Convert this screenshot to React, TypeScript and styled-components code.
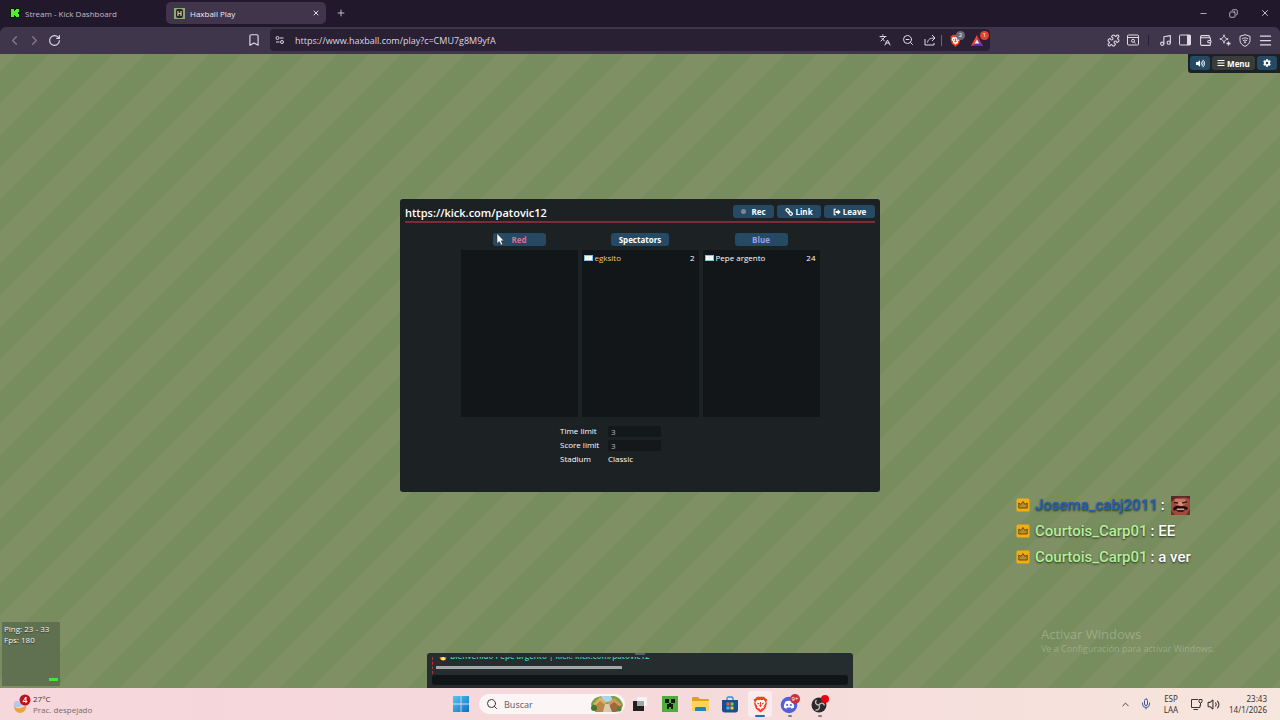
import React from "react";
import styled, { createGlobalStyle } from "styled-components";
import {
  Bookmark,
  ChevronLeft,
  ChevronRight,
  ChevronUp,
  Copy,
  Languages,
  Menu,
  Mic,
  Minus,
  Music,
  PanelRight,
  Plus,
  Puzzle,
  RotateCw,
  Search,
  Volume2,
  Wallet,
  X,
  ZoomOut,
} from "lucide-react";
import { FaBars, FaCog, FaVolumeUp } from "react-icons/fa";

const ui = `"Open Sans", "Noto Sans", sans-serif`;
const system = `"Noto Sans", "Open Sans", sans-serif`;

const Global = createGlobalStyle`
  * { box-sizing: border-box; }
  body { margin: 0; font-family: ${ui}; font-size: 8px; }
  button, input, select { font: inherit; color: inherit; border: 0; padding: 0; margin: 0; background: none; }
  svg { display: block; flex: none; }
`;

const Page = styled.div`
  display: flex;
  flex-direction: column;
  min-height: 100vh;
`;

/* ---------- browser ---------- */

const Browser = styled.header`
  background: #22182c;
  color: #e0dae5;
  font-family: ${ui};
`;

const TabStrip = styled.div`
  display: flex;
  align-items: center;
  height: 27px;
  padding: 0 0 1px 6px;
`;

const Tab = styled.div<{ $active?: boolean }>`
  display: flex;
  align-items: center;
  gap: 5px;
  width: 160px;
  height: 22px;
  padding: 0 4px;
  padding-left: ${(p) => (p.$active ? 8 : 4)}px;
  border-radius: 5px;
  font-size: 8px;
  color: ${(p) => (p.$active ? "#f0edf3" : "#c3bac9")};
  background: ${(p) => (p.$active ? "#40354a" : "transparent")};
`;

const TabTitle = styled.span`
  flex: 1;
  white-space: nowrap;
`;

const IconButton = styled.button<{ $w?: number; $dim?: boolean }>`
  display: flex;
  align-items: center;
  justify-content: center;
  position: relative;
  flex: none;
  width: ${(p) => p.$w ?? 20}px;
  height: 20px;
  color: ${(p) => (p.$dim ? "#857a90" : "#e0dae5")};
`;

const WindowButtons = styled.div`
  display: flex;
  margin-left: auto;
`;

const RestoreIcon = styled(Copy)`
  transform: scaleX(-1);
`;

const Toolbar = styled.div`
  display: flex;
  align-items: center;
  height: 27px;
  padding-bottom: 1px;
  border-radius: 6px 6px 0 0;
  background: #40364b;
`;

const ToolbarLead = styled.div`
  display: flex;
  justify-content: space-between;
  flex: 0 0 270px;
  padding: 0 6px 0 4px;
`;

const ToolbarTail = styled.div`
  display: flex;
  align-items: center;
  justify-content: flex-end;
  flex: 0 0 290px;
  padding-right: 5px;
`;

const Group = styled.div`
  display: flex;
  align-items: center;
`;

const AddressBar = styled.div`
  display: flex;
  align-items: center;
  flex: 1;
  height: 22px;
  padding-right: 1px;
  border-radius: 4px;
  background: #2a2034;
`;

const Address = styled.input`
  flex: 1;
  min-width: 0;
  margin-left: 5px;
  font-size: 9px;
  color: #ddd6e2;
`;

const Divider = styled.span<{ $tight?: boolean }>`
  width: 1px;
  height: 11px;
  margin: ${(p) => (p.$tight ? "0 3px 0 0" : "0 6px 0 5px")};
  background: ${(p) => (p.$tight ? "#6d6278" : "#2a2034")};
`;

const Count = styled.span<{ $bg: string }>`
  position: absolute;
  top: 1px;
  right: 0;
  width: 9px;
  height: 9px;
  border-radius: 5px;
  background: ${(p) => p.$bg};
  color: #fff;
  font-size: 6px;
  line-height: 9px;
  text-align: center;
`;

/* ---------- game ---------- */

const Field = styled.main`
  position: relative;
  display: flex;
  flex: 1;
  flex-direction: column;
  align-items: center;
  background-color: #7f9064;
  background-image: linear-gradient(135deg, #788d5e 25%, #7f9064 25%, #7f9064 50%, #788d5e 50%, #788d5e 75%, #7f9064 75%);
  background-size: 64px 64px;
  background-position: 17px 0;
  color: #fff;
`;

const Stage = styled.div`
  display: flex;
  flex: 1;
  align-items: center;
  justify-content: center;
  width: 100%;
  padding-bottom: 16px;
`;

const Room = styled.section`
  display: flex;
  flex-direction: column;
  width: 480px;
  max-width: 100%;
  min-height: 293px;
  padding: 5px 5px 24px;
  border-radius: 3px;
  background: #1c2124;
`;

const RoomHeader = styled.div`
  display: flex;
  align-items: center;
  justify-content: space-between;
  height: 19px;
  padding-bottom: 2px;
  border-bottom: 2px solid #7c2c36;
`;

const RoomTitle = styled.h1`
  margin: 0;
  padding-top: 2px;
  font-size: 11px;
  font-weight: 600;
  line-height: 16px;
`;

const Actions = styled.div`
  display: flex;
  gap: 3px;
`;

const GameButton = styled.button<{ $w?: number; $color?: string; $bg?: string }>`
  display: flex;
  align-items: center;
  justify-content: center;
  gap: 2px;
  width: ${(p) => p.$w ?? 54}px;
  height: 13px;
  border-radius: 3px;
  background: ${(p) => p.$bg ?? "#264a64"};
  color: ${(p) => p.$color ?? "#fff"};
  font-size: 8px;
  font-weight: 700;
  line-height: 13px;
`;

const RecDot = styled.span`
  width: 5px;
  height: 5px;
  margin-right: 3px;
  border-radius: 3px;
  background: #7b8790;
`;

const Teams = styled.div`
  display: flex;
  justify-content: center;
  gap: 4px;
  margin-top: 10px;
`;

const Team = styled.div`
  display: flex;
  flex-direction: column;
  align-items: center;
  gap: 4px;
  width: 117px;
`;

const PlayerList = styled.ul`
  width: 100%;
  height: 167px;
  margin: 0;
  padding: 1px 4px 2px 2px;
  background: #121619;
  list-style: none;
`;

const Player = styled.li<{ $admin?: boolean }>`
  display: flex;
  align-items: center;
  gap: 2px;
  height: 13px;
  color: #fff;
  font-size: 8px;
  line-height: 13px;

  span:first-of-type {
    flex: 1;
    color: ${(p) => (p.$admin ? "#e8cf6e" : "#fff")};
  }
`;

const Settings = styled.div`
  display: grid;
  grid-template-columns: 44px 53px;
  column-gap: 4px;
  width: 160px;
  margin: 7px auto 0;
  font-size: 8px;
  line-height: 14px;
  align-items: center;
`;

const Limit = styled.select`
  appearance: none;
  height: 11px;
  padding-left: 3px;
  border-radius: 2px;
  background: #14181b;
  color: #b9bdc0;
  opacity: 1;
  line-height: 11px;
`;

const TopMenu = styled.nav`
  position: absolute;
  top: 0;
  right: 0;
  display: flex;
  gap: 2px;
  padding: 2px 3px 3px 2px;
  border-radius: 0 0 0 3px;
  background: #1c2124;

  button { height: 14px; }
`;

const Stats = styled.div`
  position: absolute;
  left: 2px;
  bottom: 2px;
  width: 58px;
  height: 64px;
  padding: 1px 2px;
  background: #5f7150;
  color: #f3f5f0;
  font-size: 8px;
  line-height: 11px;
  text-shadow: 0 1px 1px #333;
`;

const PingBar = styled.span`
  position: absolute;
  right: 2px;
  bottom: 5px;
  width: 9px;
  height: 3px;
  background: #3dea2e;
`;

const Chat = styled.section`
  position: relative;
  width: 426px;
  max-width: 100%;
  height: 35px;
  padding: 4px 5px 0;
  border-radius: 3px 3px 0 0;
  background: #262d2f;
`;

const Grip = styled.span`
  position: absolute;
  top: 0;
  left: 50%;
  width: 10px;
  height: 2px;
  margin-left: -5px;
  background: #596063;
`;

const Log = styled.div`
  display: flex;
  flex-direction: column;
  justify-content: flex-end;
  height: 17px;
  overflow: hidden;
  border-left: 1px dashed #b0323c;
`;

const Welcome = styled.p`
  flex: none;
  margin: 0;
  padding-left: 5px;
  color: #3fd0bd;
  font-size: 8px;
  font-weight: 600;
  line-height: 12px;
  white-space: nowrap;
`;

const Rule = styled.hr`
  flex: none;
  width: 186px;
  height: 3px;
  margin: 4px 0 5px 3px;
  border: 0;
  background: #a3a7a7;
`;

const ChatInput = styled.input`
  display: block;
  width: 100%;
  height: 10px;
  margin-top: 1px;
  border-radius: 3px;
  background: #101517;
`;

const StreamChat = styled.div`
  position: absolute;
  right: 0;
  bottom: 118px;
  width: 264px;
  font-family: Roboto, sans-serif;
  font-size: 15px;
  font-weight: 500;
  text-shadow: 0 1px 2px rgba(0, 0, 0, 0.7);
`;

const StreamLine = styled.p<{ $color: string }>`
  display: flex;
  align-items: center;
  gap: 3px;
  height: 26px;
  margin: 0;
  white-space: nowrap;

  b { margin-left: 2px; font-weight: 500; color: ${(p) => p.$color}; }
`;

const Emote = styled.span`
  margin-left: 3px;
`;

const Watermark = styled.div`
  position: absolute;
  right: 0;
  bottom: 32px;
  width: 239px;
  color: rgba(226, 232, 214, 0.32);
  font-family: ${ui};
  font-size: 9px;
  line-height: 14px;

  strong { display: block; font-size: 13px; font-weight: 400; line-height: 16px; }
`;

const Pointer = styled.svg`
  position: absolute;
  top: 179px;
  left: calc(50% - 144px);
`;

/* ---------- taskbar ---------- */

const Taskbar = styled.footer`
  display: flex;
  align-items: center;
  height: 32px;
  background: linear-gradient(90deg, #f6d7dc, #f5d9db 50%, #f7e6dd);
  color: #3a3437;
  font-family: ${system};
  font-size: 8px;
`;

const Weather = styled.div`
  display: flex;
  flex: 1;
  align-items: center;
  gap: 2px;
  padding-left: 12px;
  font-family: ${ui};
  line-height: 11px;

  small { display: block; color: #75686c; font-size: 8px; }
`;

const Apps = styled.div`
  display: flex;
  align-items: center;
  gap: 6px;
  padding-left: 2px;
`;

const App24 = styled.button<{ $active?: boolean; $running?: boolean }>`
  position: relative;
  display: flex;
  align-items: center;
  justify-content: center;
  width: 24px;
  height: 26px;
  border-radius: 3px;
  background: ${(p) => (p.$active ? "#faecee" : "transparent")};

  &::after {
    content: "";
    position: absolute;
    bottom: 0;
    left: 50%;
    width: ${(p) => (p.$active ? 10 : p.$running ? 4 : 0)}px;
    height: 2px;
    border-radius: 1px;
    background: ${(p) => (p.$active ? "#1f6fb8" : "#857b7f")};
    transform: translateX(-50%);
  }
`;

const SearchBox = styled.label`
  display: flex;
  align-items: center;
  gap: 6px;
  width: 146px;
  height: 20px;
  margin-right: -3px;
  padding: 0 2px 0 7px;
  border-radius: 10px;
  background: #fcf5f5;

  input { flex: 1; min-width: 0; font-size: 9px; }
  input::placeholder { color: #6b6265; opacity: 1; }
`;

const Tray = styled.div`
  display: flex;
  flex: 1;
  align-items: center;
  justify-content: flex-end;
  padding-right: 13px;
  line-height: 11px;
`;

const TrayText = styled.div<{ $w: number; $right?: boolean }>`
  width: ${(p) => p.$w}px;
  text-align: ${(p) => (p.$right ? "right" : "center")};
`;

/* ---------- drawings ---------- */

const KickLogo = () => (
  <svg width="10" height="10" viewBox="0 0 10 10">
    <rect width="10" height="10" rx="1" fill="#0b1a0a" />
    <path d="M1 1h3v2h1V2h1V1h3v3H8v2h1v3H6V8H5V7H4v2H1z" fill="#4bf522" />
  </svg>
);

const HaxballLogo = () => (
  <svg width="11" height="11" viewBox="0 0 11 11">
    <rect width="11" height="11" fill="#8fa877" />
    <rect x="2" y="1" width="7" height="9" rx="2" fill="#27251f" />
    <path d="M4 3v5M7 3v5M4 5.500h3" stroke="#e2c7a4" strokeWidth="1.200" />
  </svg>
);

const TuneIcon = () => (
  <svg width="10" height="10" viewBox="0 0 10 10" fill="none" stroke="currentColor" strokeWidth="1">
    <circle cx="2.500" cy="3" r="1.500" />
    <path d="M5 3h3.500M1 7h3.500" />
    <circle cx="7" cy="7" r="1.500" />
  </svg>
);

const ShareIcon = () => (
  <svg width="12" height="12" viewBox="0 0 12 12" fill="none" stroke="currentColor">
    <path d="M1 5v6h9V9M3.500 8.500C4 5.500 6 4 10.500 4M8 1l3 3-3 3" />
  </svg>
);

const BraveLion = ({ size }: { size: number }) => (
  <svg width={size} height={size} viewBox="0 0 20 20">
    <path d="M6 1h8l2 2 2 1-1 3 .5 2-2 6L10 19.500 4.500 15l-2-6L3 7 2 4l2-1z" fill="#f1451d" />
    <path d="M6 4.500l2.500.5L10 4.500l1.500.5 2.500-.5L16 8l-1 2-1.500 2 .5 2-2.500.500L10 16.500 8.500 14.500 6 14l.5-2L5 10 4 8z" fill="#fff" />
    <path d="M6 7.500l2.500 1-.5 1.500-1.500-.5zM14 7.500l-2.500 1 .5 1.500 1.500-.5zM9.300 7h1.400v3.500l1.300 1-2 1.500-2-1.500 1.300-1z" fill="#f1451d" />
  </svg>
);

const BatLogo = () => (
  <svg width="12" height="11" viewBox="0 0 12 11">
    <path d="M6 0L0 11h6V7z" fill="#ff4b2b" />
    <path d="M6 0l6 11H6V7z" fill="#9b2f94" />
    <path d="M0 11h12L6 8z" fill="#4f2db5" />
    <path d="M6 4.500L3.800 8.500h4.400z" fill="#fff" />
  </svg>
);

const TabSearchIcon = () => (
  <svg width="12" height="12" viewBox="0 0 12 12" fill="none" stroke="currentColor" strokeWidth="1">
    <rect x="0.500" y="1" width="11" height="10" rx="1" />
    <path d="M.5 3.500h11" />
    <circle cx="6" cy="6.800" r="1.500" />
    <path d="M7.200 8l1.300 1.300" />
  </svg>
);

const SidebarIcon = () => (
  <svg width="12" height="12" viewBox="0 0 12 12">
    <rect x="0.500" y="1" width="11" height="10" rx="1" fill="none" stroke="currentColor" />
    <path d="M8 1h3.500v10H8z" fill="currentColor" />
  </svg>
);

const SparkleIcon = () => (
  <svg width="12" height="12" viewBox="0 0 12 12" fill="none" stroke="currentColor" strokeWidth="1" strokeLinejoin="round">
    <path d="M5 .8c.5 2.700 1.500 3.700 4.200 4.200C6.500 5.500 5.500 6.500 5 9.200 4.500 6.500 3.500 5.500.8 5 3.500 4.500 4.500 3.500 5 .8z" />
    <path d="M9.500 7.500v4M7.500 9.500h4" strokeWidth="1.300" />
  </svg>
);

const ShieldVpn = () => (
  <svg width="12" height="13" viewBox="0 0 12 13" fill="none" stroke="currentColor" strokeWidth="1">
    <path d="M6 .7l5 1.600v4.200c0 2.700-2.300 4.700-5 5.900C3.300 11.200 1 9.200 1 6.500V2.300z" />
    <path d="M3 5c1.800-1.500 4.200-1.500 6 0M4 6.800c1.200-1 2.800-1 4 0" />
    <circle cx="6" cy="8.300" r=".6" fill="currentColor" />
  </svg>
);

const LinkIcon = () => (
  <svg width="8" height="8" viewBox="0 0 8 8" fill="none" stroke="currentColor" strokeWidth="1.200">
    <rect x="0.800" y="1.100" width="4" height="2.600" rx="1.300" transform="rotate(45 2.800 2.400)" />
    <rect x="3.500" y="4.100" width="4" height="2.600" rx="1.300" transform="rotate(45 5.500 5.400)" />
  </svg>
);

const LeaveIcon = () => (
  <svg width="8" height="8" viewBox="0 0 8 8">
    <path d="M3 1.200H1.200v5.600H3" fill="none" stroke="currentColor" strokeWidth="1.100" />
    <path d="M2.500 3h2.200V1.200L7.700 4l-3 2.800V5H2.500z" fill="currentColor" />
  </svg>
);

const Flag = () => (
  <svg width="9" height="6" viewBox="0 0 9 6">
    <rect width="9" height="6" fill="#7cc4ea" />
    <rect x="1" y="1" width="7" height="4" fill="#f4fafc" />
    <circle cx="4.500" cy="3" r="0.800" fill="#f4e0a8" />
  </svg>
);

const CrownBadge = () => (
  <svg width="14" height="14" viewBox="0 0 14 14">
    <rect x="0.500" y="0.500" width="13" height="13" rx="1.500" fill="#f5ac0c" />
    <path d="M2.800 5l2.200 1.500L7 3.500l2 3L11.200 5v5H2.800z" fill="#b98b2a" stroke="#5a4310" strokeWidth="0.900" />
  </svg>
);

const LaughEmote = () => (
  <svg width="19" height="19" viewBox="0 0 19 19">
    <rect width="19" height="19" fill="#9c4a3d" />
    <path d="M0 0h19v3L14 1.500 5 2 0 6z" fill="#5b2a25" />
    <path d="M4 3h10l2 4-3 2H6L3 7z" fill="#c47764" />
    <path d="M3 6.500l4 .5M11 7l5-1" stroke="#35120f" strokeWidth="1.300" />
    <path d="M8 6h3l1 4H7z" fill="#d98c78" />
    <path d="M2 13c1-3 4-3.500 7-3s6-.5 8 2l-1 2-3-1H6l-3 2z" fill="#1e0c0b" />
    <path d="M6 12.500h7V14H6z" fill="#c9a898" />
    <path d="M5 14h9l-2 2H7z" fill="#4a1715" />
    <path d="M0 14l4 5H0zM19 13l-4 6h4z" fill="#6e2e28" />
  </svg>
);

const WeatherIcon = () => (
  <svg width="19" height="20" viewBox="0 0 19 20">
    <path d="M2 10c0-3 3-4 5-2 3 0 4 4 1 5H4c-2 0-3-1-2-3z" fill="#a9cdf0" />
    <path d="M2 12c2 3 8 3 12-1 1 4-2 8-6 8-3 0-6-3-6-7z" fill="#efa13a" />
    <circle cx="13" cy="6" r="5.500" fill="#b5161f" />
    <text x="13" y="9" textAnchor="middle" fontSize="8" fontWeight="600" fill="#fff">4</text>
  </svg>
);

const WindowsLogo = () => (
  <svg width="16" height="16" viewBox="0 0 16 16">
    <linearGradient id="win" x1="0" y1="0" x2="1" y2="1">
      <stop offset="0" stopColor="#55c8f2" />
      <stop offset="1" stopColor="#0a6fc9" />
    </linearGradient>
    <path d="M0 0h7.600v7.600H0zM8.400 0H16v7.600H8.400zM0 8.400h7.600V16H0zM8.400 8.400H16V16H8.400z" fill="url(#win)" />
  </svg>
);

const VillagePicture = () => (
  <svg width="32" height="18" viewBox="0 0 32 18">
    <path d="M0 9C2 3 7 1 13 1h10c5 1 8 5 9 9-1 4-4 7-8 7H7C3 16 1 13 0 9z" fill="#7aa043" />
    <path d="M10 1h10l2 5-10 2z" fill="#a9d6e8" />
    <path d="M3 9l6-6 6 6v8H4z" fill="#b98747" />
    <path d="M2 9l7-7 7 6-3 1-4-3-4 4z" fill="#dcae68" />
    <path d="M17 10l6-6 7 6v5l-6 2h-6z" fill="#a3683a" />
    <path d="M16 9l7-6 8 7-3 1-5-4-5 4z" fill="#d19a59" />
    <path d="M14 9h4l3 8h-9z" fill="#d8cbb0" />
    <circle cx="3" cy="13" r="3" fill="#3f7a33" />
    <circle cx="28" cy="14" r="2.500" fill="#4d8638" />
  </svg>
);

const TaskViewIcon = () => (
  <svg width="14" height="14" viewBox="0 0 14 14">
    <rect x="4" y="0" width="10" height="9" fill="#f5f3f3" />
    <rect x="0" y="4" width="11" height="10" fill="#1f1f20" />
    <rect x="4" y="4" width="7" height="5" fill="#a6a5a5" />
  </svg>
);

const CreeperIcon = () => (
  <svg width="16" height="16" viewBox="0 0 16 16">
    <rect width="16" height="16" fill="#4fae3b" />
    <path d="M3 3h4v4H3zM9 3h4v4H9zM7 7h2v1h2v5H9v-2H7v2H5V8h2z" fill="#0d190b" />
  </svg>
);

const FolderIcon = () => (
  <svg width="17" height="15" viewBox="0 0 17 15">
    <path d="M0 1.500C0 .5.500 0 1.500 0H6l2 2h7.500c1 0 1.500.5 1.500 1.500V7H0z" fill="#dfa021" />
    <path d="M0 4h17v8.500c0 1-.5 1.500-1.500 1.500h-14C.5 14 0 13.500 0 12.500z" fill="#fbd25b" />
    <path d="M3 11.500c0-1 .5-1.500 1.500-1.500h8c1 0 1.500.5 1.500 1.500V14H3z" fill="#2a7fc6" />
  </svg>
);

const StoreIcon = () => (
  <svg width="16" height="17" viewBox="0 0 16 17">
    <path d="M5 5V2.500C5 1.500 5.500 1 6.500 1h3c1 0 1.500.5 1.500 1.500V5" fill="none" stroke="#2c8ed8" strokeWidth="1.300" />
    <path d="M0 4h16v10c0 1.500-1 2.500-2.500 2.500h-11C1 16.500 0 15.500 0 14z" fill="#17508f" />
    <path d="M4.500 6.500h3v3h-3z" fill="#ef5a3c" />
    <path d="M8.500 6.500h3v3h-3z" fill="#8cc63f" />
    <path d="M4.500 10.500h3v3h-3z" fill="#3cb4ee" />
    <path d="M8.500 10.500h3v3h-3z" fill="#fbc230" />
  </svg>
);

const DiscordIcon = () => (
  <svg width="20" height="20" viewBox="0 0 20 20">
    <circle cx="9" cy="11" r="8.300" fill="#5360de" />
    <path d="M5.500 7.500c2-1 5-1 7 0 1 1.800 1.700 3.800 1.600 6-.8.700-1.700 1-2.500 1.200l-.7-1.100H7.100l-.7 1.100c-.8-.2-1.700-.5-2.500-1.200-.1-2.200.6-4.200 1.600-6z" fill="#fff" />
    <circle cx="7.200" cy="11" r="1.100" fill="#5360de" />
    <circle cx="10.800" cy="11" r="1.100" fill="#5360de" />
    <circle cx="15" cy="5" r="5" fill="#c83040" />
    <text x="15" y="7" textAnchor="middle" fontSize="6" fill="#fff">9+</text>
  </svg>
);

const ObsIcon = () => (
  <svg width="18" height="18" viewBox="0 0 18 18">
    <circle cx="8" cy="10" r="7.500" fill="#2a292b" />
    <path d="M8 10C4.500 10 3.500 7 5.500 5M8 10c2-3 5-2 5.500.5M8 10c1.500 3-.5 5.500-3.500 5" fill="none" stroke="#bdbcbd" strokeWidth="1.400" />
    <circle cx="14" cy="4" r="4" fill="#e8000f" />
  </svg>
);

const NetworkIcon = () => (
  <svg width="13" height="13" viewBox="0 0 13 13" fill="none" stroke="currentColor" strokeWidth="1">
    <path d="M8 1.500H1.500v8h8.500V7M3.500 11.500h4.500" />
    <path d="M9 1.500h3v2.500l-1 1h-1l-1-1zM10.500 5v3" />
  </svg>
);

/* ---------- data ---------- */

const teams = [
  { name: "Red", color: "#d9708a", width: 53, players: [] },
  { name: "Spectators", color: "#fff", width: 58, players: [{ name: "egksito", ping: 2, admin: true }] },
  { name: "Blue", color: "#9aa0e6", width: 53, players: [{ name: "Pepe argento", ping: 24, admin: false }] },
];

export default function App() {
  return (
    <Page>
      <Global />
      <Browser>
        <TabStrip>
          <Tab>
            <KickLogo />
            <TabTitle>Stream - Kick Dashboard</TabTitle>
          </Tab>
          <Tab $active>
            <HaxballLogo />
            <TabTitle>Haxball Play</TabTitle>
            <IconButton $w={12} aria-label="Close tab"><X size={8} strokeWidth={3} /></IconButton>
          </Tab>
          <IconButton $w={30} aria-label="New tab"><Plus size={10} /></IconButton>
          <WindowButtons>
            <IconButton $w={30} aria-label="Minimize"><Minus size={9} /></IconButton>
            <IconButton $w={31} aria-label="Restore"><RestoreIcon size={9} /></IconButton>
            <IconButton $w={31} aria-label="Close"><X size={10} /></IconButton>
          </WindowButtons>
        </TabStrip>
        <Toolbar>
          <ToolbarLead>
            <Group>
              <IconButton $dim aria-label="Back"><ChevronLeft size={15} strokeWidth={2} /></IconButton>
              <IconButton $dim aria-label="Forward"><ChevronRight size={15} strokeWidth={2} /></IconButton>
              <IconButton aria-label="Reload"><RotateCw size={13} strokeWidth={2} /></IconButton>
            </Group>
            <IconButton aria-label="Bookmark"><Bookmark size={14} /></IconButton>
          </ToolbarLead>
          <AddressBar>
            <IconButton aria-label="Site information"><TuneIcon /></IconButton>
            <Address aria-label="Address" defaultValue="https://www.haxball.com/play?c=CMU7g8M9yfA" />
            <IconButton $w={23} aria-label="Translate"><Languages size={12} /></IconButton>
            <IconButton $w={23} aria-label="Zoom"><ZoomOut size={12} /></IconButton>
            <IconButton $w={22} aria-label="Share"><ShareIcon /></IconButton>
            <Divider $tight />
            <IconButton aria-label="Brave shields">
              <BraveLion size={13} />
              <Count $bg="#6b6676">2</Count>
            </IconButton>
            <IconButton $w={24} aria-label="Brave rewards">
              <BatLogo />
              <Count $bg="#e2432c">1</Count>
            </IconButton>
          </AddressBar>
          <ToolbarTail>
            <IconButton aria-label="Extensions"><Puzzle size={13} /></IconButton>
            <IconButton aria-label="Search tabs"><TabSearchIcon /></IconButton>
            <Divider />
            <IconButton aria-label="Playlist"><Music size={13} /></IconButton>
            <IconButton aria-label="Sidebar"><SidebarIcon /></IconButton>
            <IconButton aria-label="Wallet"><Wallet size={13} /></IconButton>
            <IconButton aria-label="Assistant"><SparkleIcon /></IconButton>
            <IconButton aria-label="VPN"><ShieldVpn /></IconButton>
            <IconButton aria-label="Browser menu"><Menu size={15} /></IconButton>
          </ToolbarTail>
        </Toolbar>
      </Browser>

      <Field>
        <Stage>
          <Room>
            <RoomHeader>
              <RoomTitle>https://kick.com/patovic12</RoomTitle>
              <Actions>
                <GameButton $w={41}><RecDot />Rec</GameButton>
                <GameButton $w={44}><LinkIcon />Link</GameButton>
                <GameButton $w={51}><LeaveIcon />Leave</GameButton>
              </Actions>
            </RoomHeader>
            <Teams>
              {teams.map((team) => (
                <Team key={team.name}>
                  <GameButton $w={team.width} $color={team.color}>{team.name}</GameButton>
                  <PlayerList>
                    {team.players.map((p) => (
                      <Player key={p.name} $admin={p.admin}>
                        <Flag />
                        <span>{p.name}</span>
                        <span>{p.ping}</span>
                      </Player>
                    ))}
                  </PlayerList>
                </Team>
              ))}
            </Teams>
            <Settings>
              <label htmlFor="time">Time limit</label>
              <Limit id="time" disabled><option>3</option></Limit>
              <label htmlFor="score">Score limit</label>
              <Limit id="score" disabled><option>3</option></Limit>
              <span>Stadium</span>
              <span>Classic</span>
            </Settings>
          </Room>
        </Stage>

        <Chat>
          <Grip />
          <Log>
            <Welcome>🔥 Bienvenido Pepe argento | kick: kick.com/patovic12</Welcome>
            <Rule />
          </Log>
          <ChatInput aria-label="Chat message" />
        </Chat>

        <TopMenu>
          <GameButton $w={20} aria-label="Sound"><FaVolumeUp size={9} /></GameButton>
          <GameButton $w={43} $bg="#3a3c3c"><FaBars size={8} />Menu</GameButton>
          <GameButton $w={20} aria-label="Settings"><FaCog size={8} /></GameButton>
        </TopMenu>

        <Stats>
          Ping: 23 - 33<br />Fps: 180
          <PingBar />
        </Stats>

        <StreamChat>
          <StreamLine $color="#1d5fb4"><CrownBadge /><b>Josema_cabj2011</b><span>:</span><Emote><LaughEmote /></Emote></StreamLine>
          <StreamLine $color="#b5f09a"><CrownBadge /><b>Courtois_Carp01</b><span>: EE</span></StreamLine>
          <StreamLine $color="#b5f09a"><CrownBadge /><b>Courtois_Carp01</b><span>: a ver</span></StreamLine>
        </StreamChat>

        <Watermark>
          <strong>Activar Windows</strong>
          Ve a Configuración para activar Windows.
        </Watermark>

        <Pointer width="9" height="13" viewBox="0 0 9 13">
          <path d="M1 .5v10l2.300-2L5 12l1.700-.8L5.200 7.800H8z" fill="#fff" stroke="#222" strokeWidth="0.500" />
        </Pointer>
      </Field>

      <Taskbar>
        <Weather>
          <WeatherIcon />
          <div>27°C<small>Prac. despejado</small></div>
        </Weather>
        <Apps>
          <App24 aria-label="Start"><WindowsLogo /></App24>
          <SearchBox>
            <Search size={12} />
            <input aria-label="Buscar" placeholder="Buscar" />
            <VillagePicture />
          </SearchBox>
          <App24 aria-label="Task view"><TaskViewIcon /></App24>
          <App24 aria-label="Minecraft"><CreeperIcon /></App24>
          <App24 aria-label="Files"><FolderIcon /></App24>
          <App24 aria-label="Store"><StoreIcon /></App24>
          <App24 $active aria-label="Brave"><BraveLion size={17} /></App24>
          <App24 $running aria-label="Discord"><DiscordIcon /></App24>
          <App24 $running aria-label="OBS Studio"><ObsIcon /></App24>
        </Apps>
        <Tray>
          <TrayText $w={20}><ChevronUp size={11} /></TrayText>
          <Mic size={12} color="#3f5c9c" />
          <TrayText $w={38}>ESP<br />LAA</TrayText>
          <NetworkIcon />
          <TrayText $w={4} />
          <Volume2 size={13} />
          <TrayText $w={47} $right>23:43<br />14/1/2026</TrayText>
        </Tray>
      </Taskbar>
    </Page>
  );
}
